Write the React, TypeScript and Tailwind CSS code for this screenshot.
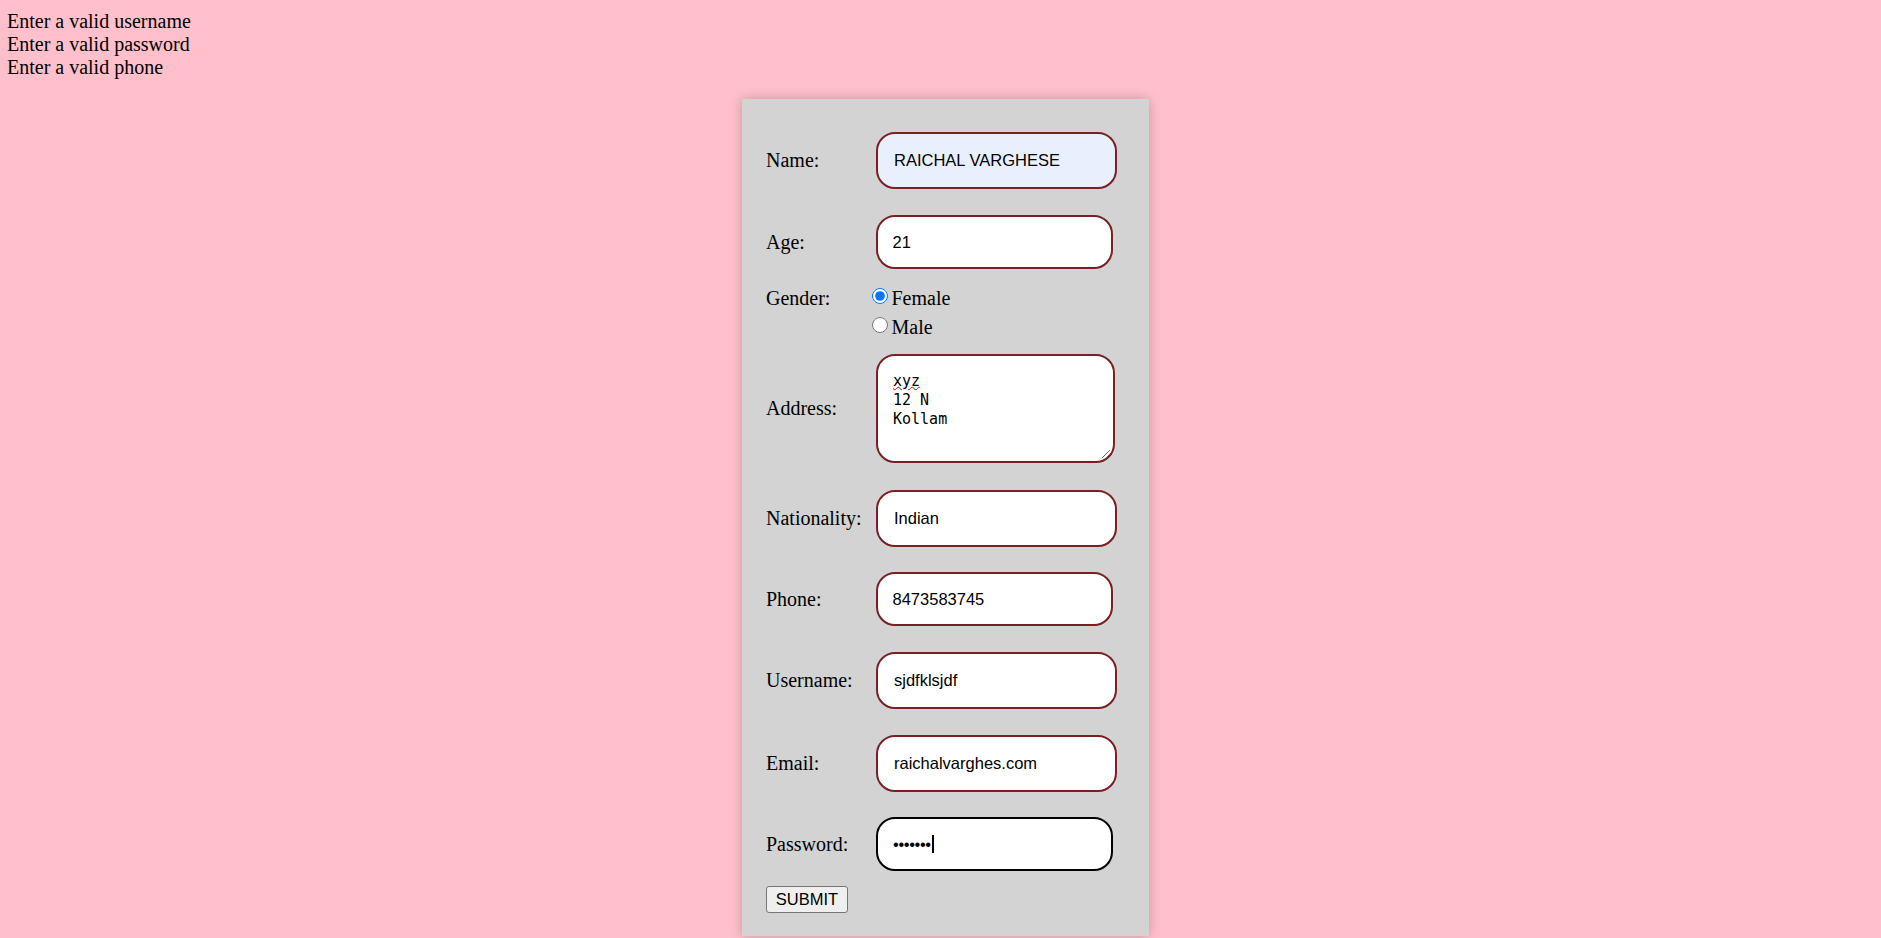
import { ReactNode } from 'react';

const sans = "font-['Liberation_Sans',Arial,sans-serif]";

interface RowProps {
  label?: string;
  children: ReactNode;
  className?: string;
}

function Row({ label, children, className = '' }: RowProps) {
  return (
    <div className={`flex items-center ${className}`}>
      <span className="w-[110px] shrink-0">{label}</span>
      {children}
    </div>
  );
}

interface FieldProps {
  value: string;
  wide?: boolean;
  filled?: boolean;
}

function Field({ value, wide = false, filled = false }: FieldProps) {
  return (
    <input
      readOnly
      value={value}
      className={`${sans} rounded-[19px] border-2 border-[#7a1f24] text-[16.5px] text-black outline-none ${
        wide ? 'h-[57px] w-[241px] pl-[16px]' : 'h-[54px] w-[237px] pl-[14.5px]'
      } ${filled ? 'bg-[#e8f0fe]' : 'bg-white'}`}
    />
  );
}

interface RadioRowProps {
  label?: string;
  option: string;
  checked?: boolean;
  className?: string;
}

function RadioRow({ label, option, checked = false, className = '' }: RadioRowProps) {
  return (
    <div className={`flex items-start leading-[23px] ${className}`}>
      <span className="w-[106px] shrink-0">{label}</span>
      <input
        type="radio"
        name="gender"
        checked={checked}
        readOnly
        className="m-0 mt-[1px] h-4 w-4 accent-[#0075ff]"
      />
      <span className="ml-[3.5px]">{option}</span>
    </div>
  );
}

export default function App() {
  return (
    <div className="min-h-screen bg-[#ffc0cb] font-['Liberation_Serif','Times_New_Roman',serif] text-[20px] leading-[23px] text-black">
      <div className="pl-[7px] pt-[10px]">
        <div>Enter a valid username</div>
        <div>Enter a valid password</div>
        <div>Enter a valid phone</div>
      </div>

      <div className="mt-[20px] flex justify-center pl-[10px]">
        <form className="flex w-[407px] flex-col bg-[#d3d3d3] pb-[23px] pl-[24px] pt-[33px] shadow-[0_0_12px_rgba(0,0,0,0.22)]">
          <Row label="Name:">
            <Field value="RAICHAL VARGHESE" wide filled />
          </Row>
          <Row label="Age:" className="mt-[26px]">
            <Field value="21" />
          </Row>

          <RadioRow label="Gender:" option="Female" checked className="mt-[18px]" />
          <RadioRow option="Male" className="mt-[6px]" />

          <Row label="Address:" className="mt-[15px]">
            <div className="relative h-[109px] w-[239px] whitespace-pre rounded-[19px] border-2 border-[#7a1f24] bg-white pl-[15px] pt-[16px] font-['DejaVu_Sans_Mono','Liberation_Mono',monospace] text-[15px] leading-[19px] text-black">
              <span className="underline decoration-red-600 decoration-wavy decoration-1 underline-offset-0">xyz</span>
              {'\n12 N\nKollam'}
              <svg
                viewBox="0 0 12 12"
                className="absolute bottom-[2px] right-[2px] h-[12px] w-[12px]"
                fill="none"
                stroke="#6b6b6b"
                strokeWidth="1"
              >
                <path d="M11 3 L3 11 M11 7 L7 11" />
              </svg>
            </div>
          </Row>

          <Row label="Nationality:" className="mt-[27px]">
            <Field value="Indian" wide />
          </Row>
          <Row label="Phone:" className="mt-[25px]">
            <Field value="8473583745" />
          </Row>
          <Row label="Username:" className="mt-[26px]">
            <Field value="sjdfklsjdf" wide />
          </Row>
          <Row label="Email:" className="mt-[26px]">
            <Field value="raichalvarghes.com" wide />
          </Row>
          <Row label="Password:" className="mt-[25px]">
            <div className={`${sans} flex h-[54px] w-[237px] items-center rounded-[19px] border-[2.5px] border-black bg-white pl-[15px] text-[16.5px] text-black`}>
              <span className="tracking-[-0.4px]">•••••••</span>
              <span className="ml-[1px] h-[18px] w-[2px] bg-black" />
            </div>
          </Row>

          <div className="mt-[15px]">
            <button
              type="button"
              className={`${sans} h-[27px] w-[82px] rounded-[3px] border border-[#767676] bg-[#efefef] text-[16.5px] leading-none text-black`}
            >
              SUBMIT
            </button>
          </div>
        </form>
      </div>
    </div>
  );
}
